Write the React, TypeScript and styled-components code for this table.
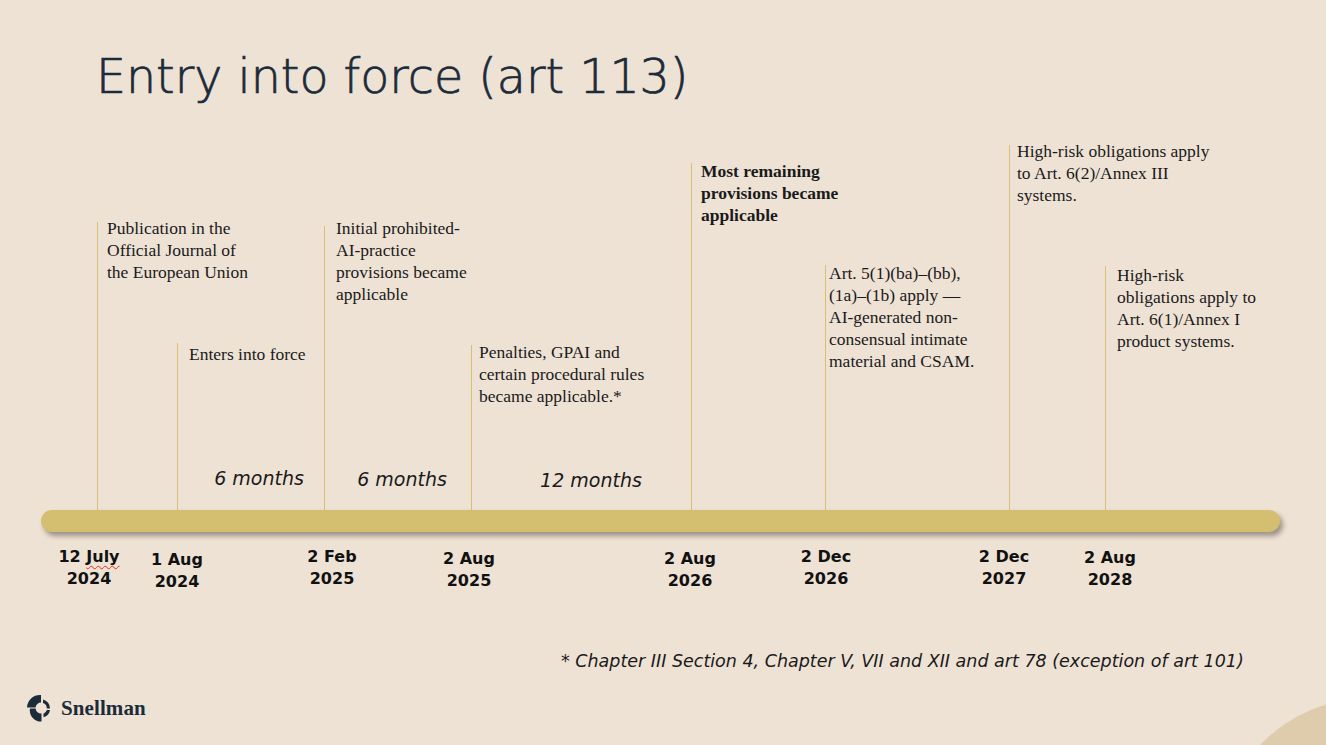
import React from "react";
import styled, { createGlobalStyle } from "styled-components";

const GlobalStyle = createGlobalStyle`
  html, body { margin: 0; padding: 0; background: #eee2d5; }
  #root { width: 1326px; height: 745px; }
`;

const TOP = 130;

const Slide = styled.div`
  position: relative;
  width: 1326px;
  height: 745px;
  overflow: hidden;
  background: #eee2d5;
  display: flex;
  flex-direction: column;
`;

const Header = styled.header`
  padding: 48px 0 0 96px;
  height: 58px;
`;

const Title = styled.h1`
  margin: 0;
  font-family: "DejaVu Sans", sans-serif;
  font-weight: 200;
  font-size: 47.5px;
  line-height: 58px;
  color: #1c2b39;
  -webkit-text-stroke: 0.7px #1c2b39;
  white-space: nowrap;
`;

const Timeline = styled.section`
  position: relative;
  margin-top: 24px;
  height: 470px;
`;

const Marker = styled.div<{ $x: number; $top: number }>`
  position: absolute;
  left: ${(p) => p.$x}px;
  top: ${(p) => p.$top - TOP}px;
  bottom: 90px;
  border-left: 1px solid #d8bf72;
`;

const MarkerText = styled.p<{ $dx: number; $dy: number; $bold?: boolean }>`
  margin: ${(p) => p.$dy}px 0 0 ${(p) => p.$dx}px;
  font-family: "Liberation Serif", serif;
  font-size: 17.5px;
  line-height: 22px;
  font-weight: ${(p) => (p.$bold ? 700 : 400)};
  color: #1a1a1a;
  white-space: nowrap;
`;

const Duration = styled.span<{ $x: number; $y: number }>`
  position: absolute;
  left: ${(p) => p.$x}px;
  top: ${(p) => p.$y - TOP - 12}px;
  transform: translateX(-50%);
  font-family: "DejaVu Sans", sans-serif;
  font-style: italic;
  font-size: 19px;
  line-height: 24px;
  color: #1a1a1a;
  white-space: nowrap;
`;

const Bar = styled.div`
  position: absolute;
  left: 41px;
  top: ${510 - TOP}px;
  width: 1239px;
  height: 22px;
  border-radius: 11px;
  background: #d4bf70;
  box-shadow: 3px 4px 5px rgba(60, 50, 40, 0.45);
`;

const DateLabel = styled.div<{ $x: number; $y: number }>`
  position: absolute;
  left: ${(p) => p.$x}px;
  top: ${(p) => p.$y - TOP - 11}px;
  transform: translateX(-50%);
  font-family: "DejaVu Sans", sans-serif;
  font-weight: 700;
  font-size: 16px;
  line-height: 22px;
  color: #111;
  text-align: center;
  white-space: nowrap;
`;

const Squiggle = styled.span`
  text-decoration: underline wavy #e0301e;
  text-decoration-thickness: 1px;
  text-underline-offset: 3px;
`;

const Footnote = styled.p`
  margin: 50px 0 0 561px;
  font-family: "DejaVu Sans", sans-serif;
  font-style: italic;
  font-size: 17.5px;
  line-height: 22px;
  color: #1a1a1a;
  white-space: nowrap;
`;

const Footer = styled.footer`
  margin-top: 22px;
  padding-left: 26px;
  display: flex;
  align-items: center;
  gap: 5px;
  height: 28px;
`;

const LogoText = styled.span`
  font-family: "Liberation Serif", serif;
  font-weight: 700;
  font-size: 21px;
  color: #1c2b39;
  letter-spacing: 0.1px;
`;

const Corner = styled.div`
  position: absolute;
  left: 1218px;
  top: 698px;
  width: 304px;
  height: 304px;
  border-radius: 50%;
  background: #dfccad;
  pointer-events: none;
`;

type M = { x: number; top: number; dx: number; textY: number; lines: string[]; bold?: boolean };

const markers: M[] = [
  { x: 97, top: 222, dx: 9, textY: 228, lines: ["Publication in the", "Official Journal of", "the European Union"] },
  { x: 177, top: 343, dx: 11, textY: 354, lines: ["Enters into force"] },
  { x: 324, top: 226, dx: 11, textY: 228, lines: ["Initial prohibited-", "AI-practice", "provisions became", "applicable"] },
  { x: 471, top: 345, dx: 7, textY: 352, lines: ["Penalties, GPAI and", "certain procedural rules", "became applicable.*"] },
  { x: 691, top: 163, dx: 9, textY: 171, lines: ["Most remaining", "provisions became", "applicable"], bold: true },
  { x: 825, top: 265, dx: 3, textY: 273, lines: ["Art. 5(1)(ba)–(bb),", "(1a)–(1b) apply —", "AI-generated non-", "consensual intimate", "material and CSAM."] },
  { x: 1009, top: 145, dx: 7, textY: 151, lines: ["High-risk obligations apply", "to Art. 6(2)/Annex III", "systems."] },
  { x: 1105, top: 266, dx: 11, textY: 275, lines: ["High-risk", "obligations apply to", "Art. 6(1)/Annex I", "product systems."] },
];

const durations = [
  { x: 259, y: 478, label: "6 months" },
  { x: 402, y: 479, label: "6 months" },
  { x: 591, y: 480, label: "12 months" },
];

const dates = [
  { x: 89, y: 557, a: "12 July", b: "2024", squiggle: true },
  { x: 177, y: 560, a: "1 Aug", b: "2024" },
  { x: 332, y: 557, a: "2 Feb", b: "2025" },
  { x: 469, y: 559, a: "2 Aug", b: "2025" },
  { x: 690, y: 559, a: "2 Aug", b: "2026" },
  { x: 826, y: 557, a: "2 Dec", b: "2026" },
  { x: 1004, y: 557, a: "2 Dec", b: "2027" },
  { x: 1110, y: 558, a: "2 Aug", b: "2028" },
];

const LogoMark = () => (
  <svg width="30" height="28" viewBox="0 0 30 28" aria-hidden>
    <g fill="#1c2b39">
      <path d="M15 1 A13 13 0 0 0 1 13.5 L9.6 13.5 A5.4 5.4 0 0 1 15 8.6 Z" />
      <path d="M9.6 14.5 L4 14.5 A11 11 0 0 0 15.5 27.5 L15.5 19.4 A5.4 5.4 0 0 1 9.6 14.5 Z" />
      <path d="M17 5.5 A9 9 0 0 1 24 14.5 L20.8 14.5 A5.8 5.8 0 0 0 17 9 Z" />
      <path d="M20.8 16 L24 16 A9 9 0 0 1 17.5 23.2 L17.5 19.8 A5.8 5.8 0 0 0 20.8 16 Z" />
    </g>
  </svg>
);

export default function App() {
  return (
    <>
      <GlobalStyle />
      <Slide>
        <Corner />
        <Header>
          <Title>Entry into force (art 113)</Title>
        </Header>
        <Timeline>
          {markers.map((m, i) => (
            <Marker key={i} $x={m.x} $top={m.top}>
              <MarkerText $dx={m.dx} $dy={m.textY - 11 - m.top} $bold={m.bold}>
                {m.lines.map((l, j) => (
                  <React.Fragment key={j}>
                    {l}
                    {j < m.lines.length - 1 && <br />}
                  </React.Fragment>
                ))}
              </MarkerText>
            </Marker>
          ))}
          {durations.map((d, i) => (
            <Duration key={i} $x={d.x} $y={d.y}>
              {d.label}
            </Duration>
          ))}
          <Bar />
          {dates.map((d, i) => (
            <DateLabel key={i} $x={d.x} $y={d.y}>
              {d.squiggle ? (
                <>
                  12 <Squiggle>July</Squiggle>
                </>
              ) : (
                d.a
              )}
              <br />
              {d.b}
            </DateLabel>
          ))}
        </Timeline>
        <Footnote>* Chapter III Section 4, Chapter V, VII and XII and art 78 (exception of art 101)</Footnote>
        <Footer>
          <LogoMark />
          <LogoText>Snellman</LogoText>
        </Footer>
      </Slide>
    </>
  );
}
